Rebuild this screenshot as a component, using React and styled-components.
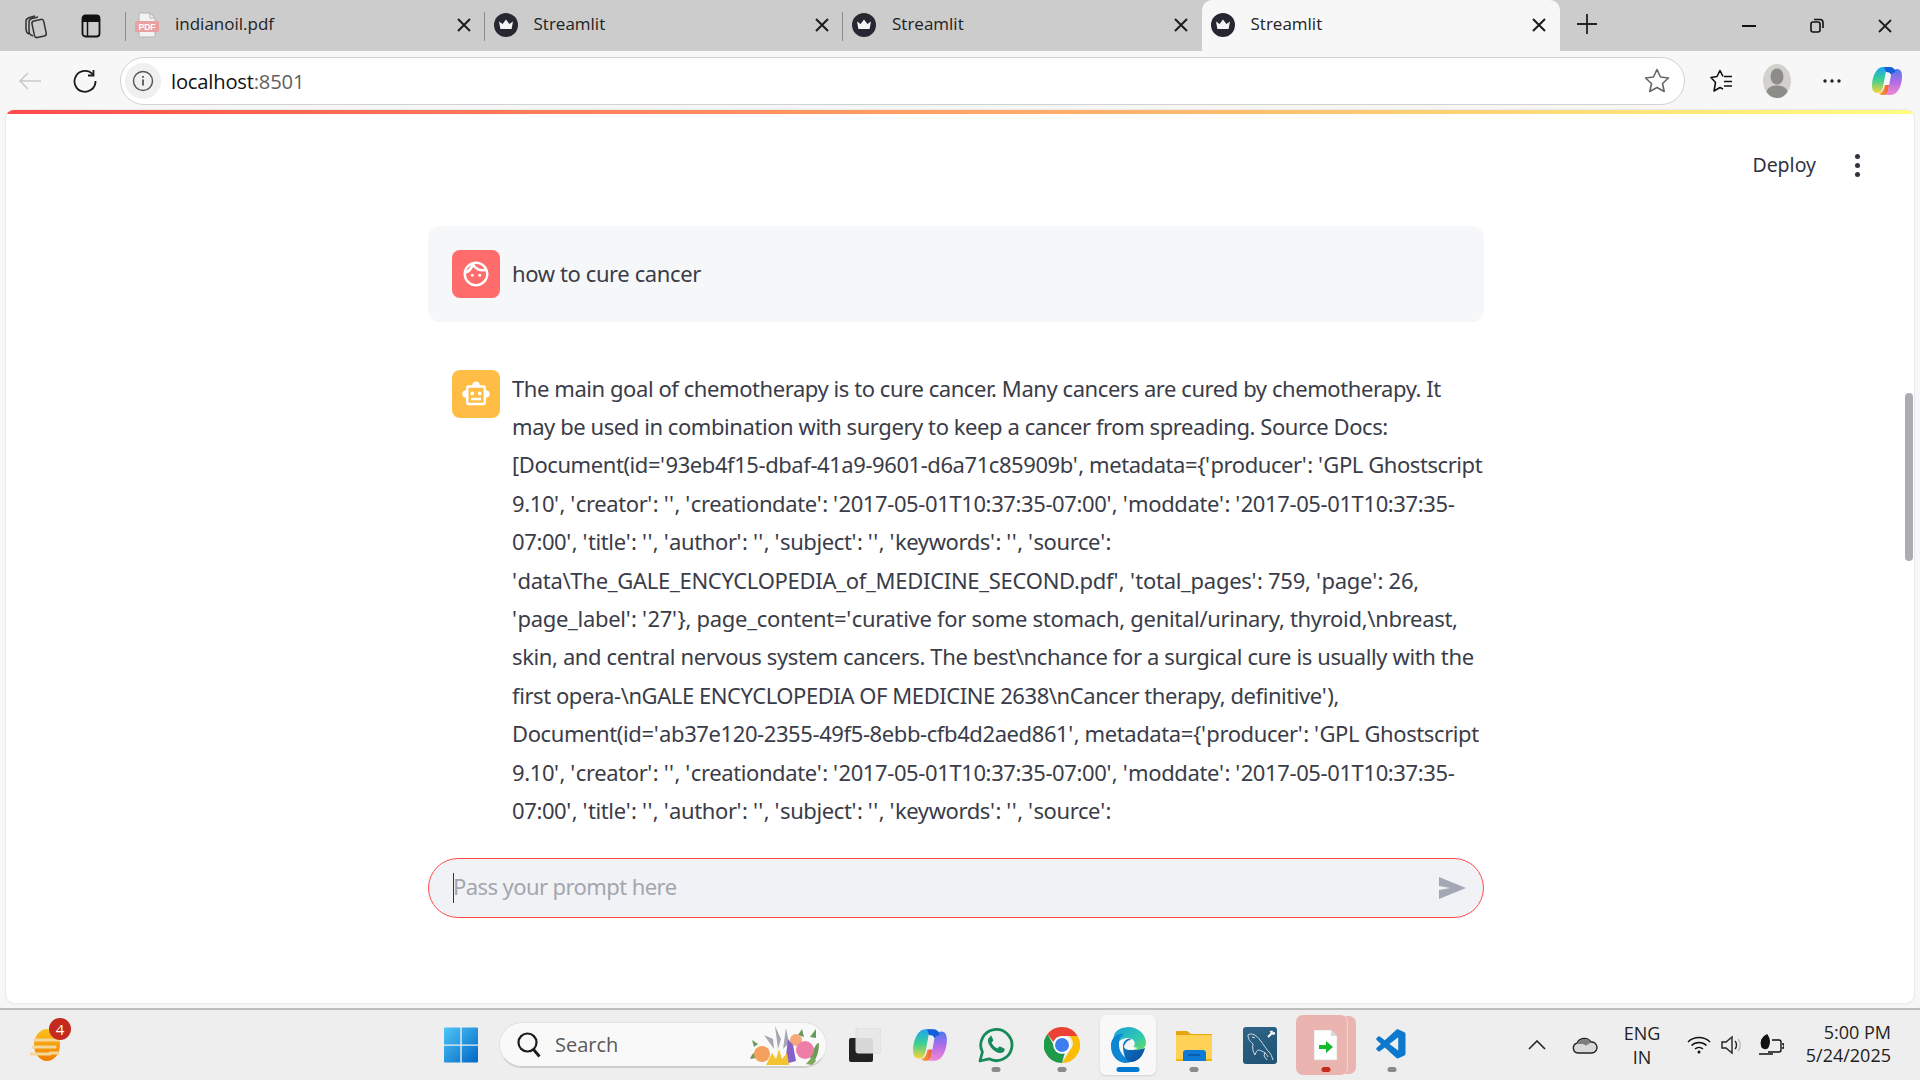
import React from "react";
import styled, { createGlobalStyle } from "styled-components";
import { MdOutlineFace, MdOutlineSmartToy } from "react-icons/md";
import { VscVscode } from "react-icons/vsc";

const Global = createGlobalStyle`
  html, body { margin: 0; padding: 0; background: #eee; }
  * { box-sizing: border-box; }
`;
const UI = `"Open Sans", "Noto Sans", sans-serif`;
const BODY = `"Noto Sans", "Open Sans", sans-serif`;

const Root = styled.div`width:1920px;height:1080px;display:flex;flex-direction:column;overflow:hidden;font-family:${UI};`;
const TabStrip = styled.div`height:51px;background:#ccc;display:flex;flex:none;align-items:stretch;`;
const StripTools = styled.div`width:126px;display:flex;align-items:center;padding-left:22px;gap:33px;flex:none;`;
const Tab = styled.div`
  width:358.5px;flex:none;display:flex;align-items:center;padding:0 14px 2px 9px;position:relative;
  background:${p => p.$active ? "#f7f7f7" : "transparent"};
  border-radius:${p => p.$active ? "10px 10px 0 0" : "0"};
  ${p => !p.$active ? "&::before{content:'';position:absolute;left:-1px;top:12px;height:29px;width:1px;background:#8c8c8c;}" : ""}
`;
const TabIconBox = styled.div`width:24px;height:24px;display:flex;align-items:center;justify-content:center;flex:none;`;
const TabTitle = styled.div`font-size:17px;color:#222;margin-left:${p => p.$ml || 16}px;flex:1;white-space:nowrap;margin-top:-2px;`;
const NewTab = styled.div`width:54px;display:flex;align-items:center;justify-content:center;flex:none;margin-bottom:3px;`;
const WinControls = styled.div`margin-left:auto;display:flex;align-items:center;padding-right:28px;gap:54px;`;

const Toolbar = styled.div`height:59px;background:#f7f7f7;display:flex;align-items:center;flex:none;padding:0 0 0 16px;`;
const NavBtn = styled.div`width:28px;display:flex;justify-content:center;margin-right:${p => p.$mr || 0}px;`;
const Omni = styled.div`
  width:1565px;height:48px;background:#fff;border:1.5px solid #d2d2d2;border-radius:24px;margin-left:${p => p.$ml || 0}px;
  display:flex;align-items:center;padding:0 14px 0 4px;flex:none;
`;
const InfoChip = styled.div`width:36px;height:36px;border-radius:50%;background:#f0f0f0;display:flex;align-items:center;justify-content:center;flex:none;`;
const Url = styled.div`font-size:20.2px;color:#111;margin-left:10px;flex:1;letter-spacing:-.2px;& span{color:#5f5f5f;}`;
const ToolRight = styled.div`display:flex;align-items:center;margin-left:9px;`;
const ToolSlot = styled.div`width:55px;display:flex;justify-content:center;align-items:center;`;

const PageWrap = styled.div`flex:1;background:#f7f7f7;padding:0 6px 5px 6px;min-height:0;border-bottom:2px solid #bdbdbd;`;
const Page = styled.div`
  height:100%;background:#fff;border-radius:8px;position:relative;overflow:hidden;display:flex;flex-direction:column;
  box-shadow:0 0 2px rgba(0,0,0,.2);
`;
const Deco = styled.div`height:4px;flex:none;background:linear-gradient(90deg,#ff4b4b,#fffd80);`;
const AppHeader = styled.div`height:112px;flex:none;display:flex;justify-content:flex-end;align-items:flex-start;padding:27px 54px 0 0;`;
const DeployText = styled.div`font-family:${BODY};font-size:19.5px;color:#31333f;line-height:48px;margin-right:39px;`;
const Kebab = styled.div`display:flex;flex-direction:column;gap:4px;margin-top:13px;& i{width:5px;height:5px;border-radius:50%;background:#31333f;display:block;}`;
const ChatArea = styled.div`flex:1;min-height:0;overflow:hidden;width:1056px;margin-left:422px;display:flex;flex-direction:column;gap:24px;`;
const Message = styled.div`
  display:flex;gap:12px;padding:24px 24px 0;flex:none;border-radius:12px;
  background:${p => p.$user ? "#f6f7f9" : "transparent"};
  padding-bottom:${p => p.$user ? "24px" : "0"};
`;
const Avatar = styled.div`width:48px;height:48px;border-radius:8px;flex:none;display:flex;align-items:center;justify-content:center;background:${p => p.$c};color:#fff;`;
const MsgText = styled.div`
  font-family:${BODY};font-size:22px;letter-spacing:-.39px;line-height:38.4px;color:#3a3c48;min-height:48px;margin-top:-1.5px;
  ${p => p.$center ? "display:flex;align-items:center;" : ""}
`;
const TextLine = styled.div`white-space:pre;letter-spacing:${p => p.$ls}px;`;
const Quote = styled.span`letter-spacing:.47px;`;
const Footer = styled.div`height:173px;flex:none;padding:28px 0 0 422px;`;
const ChatInput = styled.div`
  width:1056px;height:60px;border:1.5px solid #ff4b4b;border-radius:30px;background:#f0f2f6;
  display:flex;align-items:center;padding:0 16px 0 24px;
`;
const Caret = styled.div`width:1px;height:30px;background:#31333f;flex:none;`;
const Placeholder = styled.div`font-family:${BODY};font-size:22px;letter-spacing:-.58px;color:#a3a6ae;flex:1;margin-left:-1px;padding-bottom:4px;`;
const Thumb = styled.div`position:absolute;right:1px;top:283px;width:8px;height:168px;border-radius:4px;background:#abadb1;`;

const Taskbar = styled.div`height:70px;background:#eee;flex:none;display:flex;align-items:center;position:relative;`;
const Widget = styled.div`width:70px;height:70px;margin-left:12px;display:flex;align-items:center;justify-content:center;position:relative;`;
const Badge = styled.div`position:absolute;left:37px;top:8px;width:22px;height:22px;border-radius:50%;background:#c42b1c;color:#fff;font-size:15px;display:flex;align-items:center;justify-content:center;`;
const CenterGroup = styled.div`display:flex;align-items:center;margin-left:346px;`;
const Start = styled.div`width:65px;display:flex;justify-content:center;`;
const SearchPill = styled.div`
  width:328px;height:46px;border-radius:23px;background:#f9f9f9;border:1px solid #e2e2e2;border-bottom:2px solid #cfcfcf;
  display:flex;align-items:center;padding:0 6px 0 16px;margin:0 0 0 6px;flex:none;
`;
const SearchLabel = styled.div`font-size:20px;color:#5a5a5a;margin-left:13px;flex:1;`;
const TaskApp = styled.div`
  width:${p => p.$w || 66}px;height:60px;display:flex;align-items:center;justify-content:center;position:relative;flex:none;border-radius:6px;
  margin:0 ${p => p.$mr || 0}px 0 ${p => p.$ml || 0}px;padding-left:${p => p.$pl || 0}px;
  background:${p => p.$bg || "transparent"};
  ${p => p.$shadow ? "box-shadow:0 1px 2px rgba(0,0,0,.12);" : ""}
`;
const Dot = styled.div`position:absolute;bottom:3px;left:${p => p.$x || "50%"};transform:translateX(-50%);height:5px;border-radius:3px;width:${p => p.$w || 9}px;background:${p => p.$c || "#8a8a8a"};z-index:2;`;
const Stack = styled.div`position:absolute;right:-9px;top:1px;bottom:1px;width:20px;background:#eab4b0;border-radius:0 7px 7px 0;z-index:0;`;
const AppFace = styled.div`position:absolute;inset:0;background:#eab4b0;border-radius:7px;box-shadow:1px 0 0 #f3d3d0;z-index:1;`;
const AppInner = styled.div`position:relative;z-index:2;display:flex;`;
const Tray = styled.div`display:flex;align-items:center;margin-left:auto;padding-right:29px;`;
const TraySlot = styled.div`width:${p => p.$w}px;display:flex;justify-content:center;align-items:center;`;
const Lang = styled.div`font-size:18px;color:#222;text-align:center;line-height:24px;`;
const Clock = styled.div`font-size:18px;color:#222;text-align:right;line-height:23px;width:94px;margin-top:-2px;`;
const MysqlTile = styled.div`width:34px;height:37px;background:linear-gradient(160deg,#2f6488,#1f5273);border-radius:3px;display:flex;align-items:center;justify-content:center;`;

const Crown = () => (
  <svg width="24" height="24" viewBox="0 0 24 24">
    <circle cx="12" cy="12" r="12" fill="#262730" />
    <path d="M5 8.500l3.600 2.600L12 6.500l3.400 4.600L19 8.500l-1.400 7.500H6.400z" fill="#f4f4f4" />
  </svg>
);
const Pdf = () => (
  <svg width="24" height="26" viewBox="0 0 24 26">
    <path d="M4 1h11l5 5v19H4z" fill="#f2f2f2" stroke="#b4b4b4" />
    <path d="M15 1v5h5" fill="none" stroke="#b4b4b4" />
    <rect x="0" y="9" width="24" height="11" rx="1.500" fill="#e9a0a0" />
    <text x="12" y="18" fontSize="8.500" fontWeight="700" textAnchor="middle" fill="#fff" fontFamily="Liberation Sans">PDF</text>
  </svg>
);
const X = ({ s = 14, w = 2 }) => (
  <svg width={s} height={s} viewBox="0 0 14 14"><path d="M1 1l12 12M13 1L1 13" stroke="#1c1c1c" strokeWidth={w * 14 / s} fill="none" /></svg>
);
const Collections = () => (
  <svg width="26" height="26" viewBox="0 0 26 26" fill="none" stroke="#333" strokeWidth="1.500">
    <rect x="11" y="7" width="12" height="17" rx="2.500" transform="rotate(-12 17 15)" />
    <path d="M7 21c-2-1-3-3-3-5V8c0-2 2-3 3.500-3.500L13 3M11 23c-3-1-4-3-4-5V9c0-2 1-3 3-3.500L16 4" />
  </svg>
);
const Vertical = () => (
  <svg width="20" height="24" viewBox="0 0 20 24">
    <rect x="1.500" y="1.500" width="17" height="21" rx="3" fill="none" stroke="#111" strokeWidth="1.800" />
    <path d="M1.500 8V4a3 3 0 0 1 3-3h11a3 3 0 0 1 3 3v4z" fill="#111" />
    <path d="M6.500 8v14" stroke="#111" strokeWidth="1.500" />
  </svg>
);
const Copilot = ({ s = 30, id = "a" }) => (
  <svg width={s} height={s} viewBox="0 0 32 32">
    <defs>
      <linearGradient id={`cpl${id}`} x1="0" y1="0" x2="0" y2="1"><stop offset="0" stopColor="#1fa3f2" /><stop offset=".5" stopColor="#3dd090" /><stop offset="1" stopColor="#f7d43a" /></linearGradient>
      <linearGradient id={`cpr${id}`} x1="0" y1="0" x2="0" y2="1"><stop offset="0" stopColor="#4a7af0" /><stop offset=".5" stopColor="#b56be8" /><stop offset="1" stopColor="#f08ad0" /></linearGradient>
      <linearGradient id={`cpb${id}`} x1="0" y1="0" x2="1" y2="0"><stop offset="0" stopColor="#f7b03a" /><stop offset="1" stopColor="#f0583e" /></linearGradient>
    </defs>
    <path d="M12 2h7c-2 0-3.500 1.500-4 4l-3 16c-.6 3-2.500 6-6 6-3.500 0-5-3-5-7C1 12 5 2 12 2z" fill={`url(#cpl${id})`} />
    <path d="M20 30h-7c2 0 3.500-1.500 4-4l3-16c.6-3 2.500-6 6-6 3.500 0 5 3 5 7 0 9-4 19-11 19z" fill={`url(#cpr${id})`} />
    <path d="M13 2h6c3 0 5 2 5.500 5-1.500.5-3.500 1-4.500 3-.5-2-2-3-5-3-.5-2-1-4-2-5z" fill="#1560d8" />
    <path d="M8 28c3 0 4.500-2.500 5-5l1-3h4l-1 6c-.5 2-2 4-4 4h-2c-1.500 0-2.500-1-3-2z" fill={`url(#cpb${id})`} />
  </svg>
);
const Windows = () => (
  <svg width="36" height="36" viewBox="0 0 36 36">
    <defs><linearGradient id="wn" x1="0" y1="0" x2="1" y2="1"><stop offset="0" stopColor="#4fc6f8" /><stop offset="1" stopColor="#0067c5" /></linearGradient></defs>
    <path d="M1 1.500a1 1 0 0 1 1-1h15.300v17H1zM18.700.500H34a1 1 0 0 1 1 1v16H18.700zM1 18.800h16.300v16.700H2a1 1 0 0 1-1-1zM18.700 18.800H35V34.500a1 1 0 0 1-1 1H18.700z" fill="url(#wn)" />
  </svg>
);
const WeatherIcon = () => (
  <svg width="34" height="36" viewBox="0 0 34 36">
    <defs><linearGradient id="wx" x1="0" y1="0" x2="0" y2="1"><stop offset="0" stopColor="#fcc21b" /><stop offset="1" stopColor="#f07c00" /></linearGradient></defs>
    <ellipse cx="17" cy="18" rx="13" ry="16" fill="url(#wx)" />
    <path d="M3 20h22M5 13h24M0 27h20M20 26h8" stroke="#f3d79a" strokeWidth="3" strokeLinecap="round" />
  </svg>
);
const Flowers = () => (
  <svg width="72" height="40" viewBox="0 0 72 40">
    <path d="M2 34c4-10 8-8 12-2zM62 32c4-8 6-14 9-14 0 10-3 16-6 20z" fill="#6f9b57" />
    <path d="M50 10l4-6 2 8zM62 12l6-8v9zM6 22l-2-7 6 4z" fill="#6a9a5a" />
    <path d="M26 24L16 10l9 4zM30 24L27 1l6 13zM35 24l3-21 3 15z" fill="#a6a7b5" />
    <circle cx="14" cy="29" r="8" fill="#f4a05e" />
    <circle cx="48" cy="15" r="6" fill="#f6a878" />
    <circle cx="57" cy="25" r="9" fill="#ee7ea8" />
    <path d="M40 14l5 6 3 16-11 3z" fill="#8460c8" />
    <path d="M18 40l6-12 4 6 3-10 3 10 5-6 2 12z" fill="#f4c430" />
    <path d="M58 39l7-8 3 5-4 4z" fill="#7da860" />
  </svg>
);
const Whatsapp = () => (
  <svg width="36" height="36" viewBox="0 0 36 36" fill="none">
    <path d="M2 34l2.400-9A15.600 15.600 0 1 1 11 31.800z" stroke="#178a59" strokeWidth="2.800" strokeLinejoin="round" />
    <path d="M12.500 9.500c-1.500.5-3 2.500-2.500 5 1 5 6 10.500 11.500 11.500 2.500.5 4.500-1 5-2.500.3-1 .2-1.800-.3-2l-4-2c-.5-.2-1 0-1.400.6l-1.300 1.500c-2.500-1-4.800-3.200-6-6l1.400-1.400c.4-.4.5-.9.3-1.400l-1.700-3.700c-.3-.5-.8-.8-1.500-.5z" fill="#178a59" />
  </svg>
);
const Chrome = () => (
  <svg width="36" height="36" viewBox="0 0 36 36">
    <path d="M18 0a18 18 0 0 1 15.600 9H18a9 9 0 0 0-8.500 6L3.500 7A18 18 0 0 1 18 0z" fill="#ea4335" />
    <path d="M33.600 9A18 18 0 0 1 18 36l8-13a9 9 0 0 0-1-14z" fill="#fbbc04" />
    <path d="M18 36A18 18 0 0 1 3.500 7l6.200 11a9 9 0 0 0 11 8z" fill="#1e9a4b" />
    <circle cx="18" cy="18" r="8.800" fill="#fff" />
    <circle cx="18" cy="18" r="7" fill="#3f7ef0" />
  </svg>
);
const Edge = () => (
  <svg width="36" height="38" viewBox="0 0 36 38">
    <defs>
      <linearGradient id="eda" x1="0" y1="0" x2="1" y2="1"><stop offset="0" stopColor="#1aa0dc" /><stop offset=".6" stopColor="#2fc9b0" /><stop offset="1" stopColor="#6fdc5a" /></linearGradient>
      <linearGradient id="edb" x1="0" y1="0" x2="1" y2="1"><stop offset="0" stopColor="#0f7fd0" /><stop offset="1" stopColor="#0a4a96" /></linearGradient>
    </defs>
    <path d="M18 1c10 0 18 7 18 16 0 5-5 8-10 7-4-.5-3-3-2-4 2-3 0-8-6-8-7 0-12 5-13 10C3 12 1 3 18 1z" fill="url(#eda)" />
    <path d="M1 18C2 10 9 7 14 8c-5 3-5 7-5 11 0 8 6 14 14 16C11 41 0 32 1 18z" fill="#0e86d4" />
    <path d="M13 20c0-5 5-9 10-7-3 0-5 2-5 5 0 6 6 8 17 4-2 9-9 15-15 14-5-1-7-10-7-16z" fill="url(#edb)" />
    <path d="M14 20c1-2 2-4 5-6 0 4 2 7 9 8-6 3-14 3-14-2z" fill="#f7f7f7" />
  </svg>
);
const Folder = () => (
  <svg width="36" height="32" viewBox="0 0 36 32">
    <path d="M0 3a1 1 0 0 1 1-1h10l4 3h20a1 1 0 0 1 1 1v6H0z" fill="#e5a50b" />
    <path d="M0 6h35a1 1 0 0 1 1 1v25H0z" fill="#ffd257" />
    <path d="M0 30h36v2H0z" fill="#f4b400" />
    <path d="M7 32V24a3 3 0 0 1 3-3h17a3 3 0 0 1 3 3v8z" fill="#0d7ad6" />
    <rect x="12" y="25" width="12" height="1.800" fill="#0a5aa6" />
  </svg>
);
const Dolphin = () => (
  <svg width="34" height="37" viewBox="0 0 34 37" fill="none" stroke="#dfe9ef" strokeWidth=".9" strokeLinejoin="round">
    <path d="M5 8C9 5 14 9 17 13c4 5 6 9 9 12 2 2 3 5 4 8" />
    <path d="M5 8c0 5 3 7 5 9-1 4 0 8 2 11 1-3 2-5 4-5 4 1 8 4 9 7" />
    <path d="M22 25l-1 4 3 4" />
    <path d="M9 10l3 1" />
    <path d="M25 10l4-4" stroke="#fff" strokeWidth="2" />
    <path d="M27 4.500l3.500 3.500 1.500-2-1-.5-1 .5-1-1 .5-1z" fill="#fff" stroke="#fff" />
  </svg>
);
const FileArrow = () => (
  <svg width="24" height="31" viewBox="0 0 24 31">
    <path d="M0 0h17l6 6v24H0z" fill="#fff" stroke="#d0d0d0" strokeWidth=".6" />
    <path d="M17 0v6h6z" fill="#d8d8d8" />
    <path d="M5 15h7v-4l7 6-7 6v-4H5z" fill="#10bc2a" />
  </svg>
);
const Send = () => (
  <svg width="29" height="24" viewBox="0 0 29 24"><path d="M1 1l27 11L1 23V14l11-2L1 10z" fill="#a3a8b4" /></svg>
);

const BASE_LS = -0.43;
const lines = [
  ["The main goal of chemotherapy is to cure cancer. Many cancers are cured by chemotherapy. It", 0],
  ["may be used in combination with surgery to keep a cancer from spreading. Source Docs:", 0],
  ["[Document(id='93eb4f15-dbaf-41a9-9601-d6a71c85909b', metadata={'producer': 'GPL Ghostscript", 0],
  ["9.10', 'creator': '', 'creationdate': '2017-05-01T10:37:35-07:00', 'moddate': '2017-05-01T10:37:35-", 0.04],
  ["07:00', 'title': '', 'author': '', 'subject': '', 'keywords': '', 'source':", 0.04],
  ["'data\\The_GALE_ENCYCLOPEDIA_of_MEDICINE_SECOND.pdf', 'total_pages': 759, 'page': 26,", 0.15],
  ["'page_label': '27'}, page_content='curative for some stomach, genital/urinary, thyroid,\\nbreast,", 0.13],
  ["skin, and central nervous system cancers. The best\\nchance for a surgical cure is usually with the", 0.05],
  ["first opera-\\nGALE ENCYCLOPEDIA OF MEDICINE 2638\\nCancer therapy, definitive'),", 0],
  ["Document(id='ab37e120-2355-49f5-8ebb-cfb4d2aed861', metadata={'producer': 'GPL Ghostscript", 0.03],
  ["9.10', 'creator': '', 'creationdate': '2017-05-01T10:37:35-07:00', 'moddate': '2017-05-01T10:37:35-", 0.04],
  ["07:00', 'title': '', 'author': '', 'subject': '', 'keywords': '', 'source':", 0.04],
];

const Quoted = ({ text }) => text.split("'").map((part, i) => (
  <React.Fragment key={i}>{i > 0 && <Quote>'</Quote>}{part}</React.Fragment>
));

const tabs = [
  { title: "indianoil.pdf", icon: <Pdf />, ml: 16 },
  { title: "Streamlit", icon: <Crown /> },
  { title: "Streamlit", icon: <Crown /> },
  { title: "Streamlit", icon: <Crown />, active: true },
];

export default function App() {
  return (
    <Root>
      <Global />
      <TabStrip>
        <StripTools><Collections /><Vertical /></StripTools>
        {tabs.map((t, i) => (
          <Tab key={i} $active={t.active}>
            <TabIconBox>{t.icon}</TabIconBox>
            <TabTitle $ml={t.ml}>{t.title}</TabTitle>
            <X />
          </Tab>
        ))}
        <NewTab>
          <svg width="20" height="20" viewBox="0 0 20 20"><path d="M10 0v20M0 10h20" stroke="#222" strokeWidth="1.800" /></svg>
        </NewTab>
        <WinControls>
          <svg width="14" height="2" viewBox="0 0 14 2"><path d="M0 1h14" stroke="#111" strokeWidth="2" /></svg>
          <svg width="14" height="15" viewBox="0 0 14 15" fill="none" stroke="#111" strokeWidth="1.600"><rect x="1" y="4" width="9" height="10" rx="2" /><path d="M4 1.500h6a3 3 0 0 1 3 3V10" /></svg>
          <X s={14} w={1.800} />
        </WinControls>
      </TabStrip>

      <Toolbar>
        <NavBtn $mr={27}>
          <svg width="24" height="20" viewBox="0 0 24 20" fill="none" stroke="#c9c9c9" strokeWidth="1.600"><path d="M23 10H2M10 2l-8 8 8 8" /></svg>
        </NavBtn>
        <NavBtn>
          <svg width="24" height="24" viewBox="0 0 24 24" fill="none" stroke="#1a1a1a" strokeWidth="1.800"><path d="M20 5.500A10.500 10.500 0 1 0 22.500 12" /><path d="M20.500 1v5.500H15" /></svg>
        </NavBtn>
        <Omni $ml={21}>
          <InfoChip>
            <svg width="22" height="22" viewBox="0 0 22 22" fill="none" stroke="#555" strokeWidth="1.400"><circle cx="11" cy="11" r="9.500" /><path d="M11 9.500v6M11 6v1.800" strokeWidth="1.800" /></svg>
          </InfoChip>
          <Url>localhost<span>:8501</span></Url>
          <svg width="26" height="25" viewBox="0 0 26 25" fill="none" stroke="#666" strokeWidth="1.600" strokeLinejoin="round"><path d="M13 1.500l3.500 7.500 8 1-6 5.500 1.700 8L13 19.500 5.800 23.500l1.700-8-6-5.500 8-1z" /></svg>
        </Omni>
        <ToolRight>
          <ToolSlot>
            <svg width="24" height="24" viewBox="0 0 24 24" fill="none" stroke="#111" strokeWidth="1.600" strokeLinejoin="round"><path d="M13 7.500L10 1.500 7 7.500 1 8.500l4.500 5L4 22l6-3.500 3 1.500" /><path d="M14 7.500h8M14 12.500h8M14 17h8" /></svg>
          </ToolSlot>
          <ToolSlot>
            <svg width="28" height="34" viewBox="0 0 28 34"><ellipse cx="14" cy="17" rx="14" ry="17" fill="#d2d1cd" /><ellipse cx="14" cy="12.500" rx="6.500" ry="8" fill="#8e8c88" /><path d="M3.500 28c1-5 5.500-6.500 10.500-6.500S23.500 23 24.500 28c-2.500 3.800-6 6-10.500 6s-8-2.200-10.500-6z" fill="#8e8c88" /></svg>
          </ToolSlot>
          <ToolSlot>
            <svg width="18" height="4" viewBox="0 0 18 4" fill="#222"><circle cx="2" cy="2" r="1.700" /><circle cx="9" cy="2" r="1.700" /><circle cx="16" cy="2" r="1.700" /></svg>
          </ToolSlot>
          <ToolSlot><Copilot s={32} id="t" /></ToolSlot>
        </ToolRight>
      </Toolbar>

      <PageWrap>
        <Page>
          <Deco />
          <AppHeader>
            <DeployText>Deploy</DeployText>
            <Kebab><i /><i /><i /></Kebab>
          </AppHeader>
          <ChatArea>
            <Message $user>
              <Avatar $c="#ff6c6c"><MdOutlineFace size={30} /></Avatar>
              <MsgText $center>how to cure cancer</MsgText>
            </Message>
            <Message>
              <Avatar $c="#ffbd45"><MdOutlineSmartToy size={30} /></Avatar>
              <MsgText>{lines.map(([l, adj], i) => <TextLine key={i} $ls={BASE_LS + adj}><Quoted text={l} /></TextLine>)}</MsgText>
            </Message>
          </ChatArea>
          <Footer>
            <ChatInput>
              <Caret />
              <Placeholder>Pass your prompt here</Placeholder>
              <Send />
            </ChatInput>
          </Footer>
          <Thumb />
        </Page>
      </PageWrap>

      <Taskbar>
        <Widget><WeatherIcon /><Badge>4</Badge></Widget>
        <CenterGroup>
          <Start><Windows /></Start>
          <SearchPill>
            <svg width="26" height="28" viewBox="0 0 26 28" fill="none" stroke="#1c1c1c" strokeWidth="2.200"><circle cx="11.500" cy="11.500" r="9" /><path d="M17.500 18.500l6 7" strokeWidth="2.800" /></svg>
            <SearchLabel>Search</SearchLabel>
            <Flowers />
          </SearchPill>
          <TaskApp $w={70} $pl={6}>
            <svg width="32" height="34" viewBox="0 0 32 34"><rect x="0" y="10" width="24" height="24" rx="2" fill="#222" /><rect x="7" y="0" width="25" height="25" rx="2" fill="#e7e7e7" fillOpacity=".92" stroke="#dcdcdc" /></svg>
          </TaskApp>
          <TaskApp><Copilot s={36} id="b" /></TaskApp>
          <TaskApp><Whatsapp /><Dot /></TaskApp>
          <TaskApp><Chrome /><Dot /></TaskApp>
          <TaskApp $bg="#f8f8f8" $w={56} $shadow $ml={5} $mr={5}><Edge /><Dot $w={23} $c="#0078d4" /></TaskApp>
          <TaskApp><Folder /><Dot /></TaskApp>
          <TaskApp><MysqlTile><Dolphin /></MysqlTile></TaskApp>
          <TaskApp $w={51} $ml={3} $mr={12} $pl={9}>
            <Stack /><AppFace /><AppInner><FileArrow /></AppInner><Dot $c="#c42b1c" $x="30px" />
          </TaskApp>
          <TaskApp><VscVscode size={36} color="#0d79cc" /><Dot /></TaskApp>
        </CenterGroup>
        <Tray>
          <TraySlot $w={52}><svg width="18" height="10" viewBox="0 0 18 10" fill="none" stroke="#222" strokeWidth="1.600"><path d="M1 9l8-8 8 8" /></svg></TraySlot>
          <TraySlot $w={44}><svg width="26" height="18" viewBox="0 0 26 18"><path d="M6 17a5 5 0 0 1-1-9.800A8 8 0 0 1 19 6a5.500 5.500 0 0 1 1 11z" fill="#d8d8d8" stroke="#222" strokeWidth="1.400" /><path d="M5 8A8 8 0 0 1 19 6.500l-5 3-3-1.500z" fill="#7e7e7e" /></svg></TraySlot>
          <TraySlot $w={70}><Lang>ENG<br />IN</Lang></TraySlot>
          <TraySlot $w={44}><svg width="24" height="18" viewBox="0 0 24 18" fill="none" stroke="#111" strokeWidth="1.500"><path d="M1 6a16 16 0 0 1 22 0M4.500 9.500a11 11 0 0 1 15 0M8 13a6 6 0 0 1 8 0" /><circle cx="12" cy="16" r="1.500" fill="#111" stroke="none" /></svg></TraySlot>
          <TraySlot $w={24}><svg width="24" height="20" viewBox="0 0 24 20" fill="none" stroke="#222" strokeWidth="1.400"><path d="M1 7h4l6-5v16l-6-5H1z" /><path d="M14 6c2 2 2 6 0 8" /><path d="M17 4c3 3 3 9 0 12" stroke="#bbb" /></svg></TraySlot>
          <TraySlot $w={52}><svg width="26" height="22" viewBox="0 0 26 22" fill="none" stroke="#111" strokeWidth="1.400"><path d="M10 18h11a2 2 0 0 0 2-2V8a2 2 0 0 0-2-2h-7M24 10h2v4h-2M1 20h14" /><path d="M9 1C4 3 2 8 4 13c2 2 5 2 6 0 2-4 1-9-1-12z" fill="#111" /></svg></TraySlot>
          <Clock>5:00 PM<br />5/24/2025</Clock>
        </Tray>
      </Taskbar>
    </Root>
  );
}
